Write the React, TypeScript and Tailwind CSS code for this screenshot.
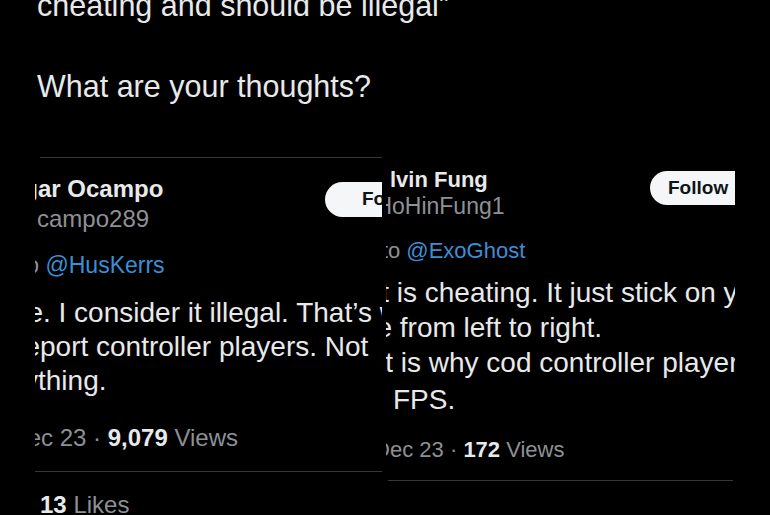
type FragProps = { w: string; shift: string; ch: string };

// right-hand slice of a glyph that was cut off by the screenshot crop
function Frag({ w, shift, ch }: FragProps) {
  return (
    <span className={`inline-block overflow-hidden align-top ${w}`}>
      <span className={`inline-block ${shift}`}>{ch}</span>
    </span>
  );
}

function LeftTweet() {
  return (
    <section className="ml-[35px] mt-[50.5px] w-[390px]">
      <div className="ml-[5px] h-px bg-[#35383b]" />
      <div className="flex items-start justify-between">
        <div className="pt-[16px]">
          <div className="whitespace-nowrap text-[24px] font-bold leading-[30px]">
            <Frag w="w-[3px]" shift="-ml-[11.7px]" ch="g" />
            ar Ocampo
          </div>
          <div className="whitespace-nowrap pl-[2px] text-[24px] leading-[30px] text-[#8d9196]">campo289</div>
        </div>
        <button
          type="button"
          className="mt-[24px] h-[35px] w-[100px] rounded-full bg-[#f4f6f7] pl-[37px] text-left text-[19px] font-bold text-[#0f1419]"
        >
          Follow
        </button>
      </div>
      <div className="mt-[16px] whitespace-nowrap text-[23px] leading-[30px] text-[#8d9196]">
        <Frag w="w-[4px]" shift="-ml-[8.8px]" ch="o" />{" "}
        <span className="text-[#3b8fd6]">@HusKerrs</span>
      </div>
      <div className="mt-[16px] text-[28px] leading-[34px]">
        <div className="whitespace-nowrap">
          <Frag w="w-[8px]" shift="-ml-[7.6px]" ch="e" />. I consider it illegal. That’s why
        </div>
        <div className="whitespace-nowrap">
          <Frag w="w-[5px]" shift="-ml-[10.6px]" ch="e" />port controller players. Not
        </div>
        <div className="whitespace-nowrap">
          <Frag w="w-[3px]" shift="-ml-[11px]" ch="y" />thing.
        </div>
      </div>
      <div className="mt-[25px] whitespace-nowrap text-[24px] leading-[30px] text-[#8d9196]">
        <Frag w="w-[6px]" shift="-ml-[7.3px]" ch="e" />c 23 · <span className="font-bold text-[#e7e9ea]">9,079</span> Views
      </div>
      <div className="mt-[18px] h-px bg-[#35383b]" />
      <div className="mt-[18px] pl-[5px] text-[24px] leading-[30px]">
        <span className="font-bold">13</span> <span className="text-[#8d9196]">Likes</span>
      </div>
    </section>
  );
}

function RightTweet() {
  return (
    <section className="absolute bottom-0 left-[382px] top-[150px] w-[353px] overflow-hidden bg-black pl-[4px]">
      <div className="flex w-[364px] items-start justify-between pt-[18px]">
        <div>
          <div className="whitespace-nowrap pl-[4px] text-[22px] font-bold leading-[24px]">lvin Fung</div>
          <div className="whitespace-nowrap text-[23px] leading-[28px] text-[#8d9196]">
            <Frag w="w-[6px]" shift="-ml-[10.6px]" ch="H" />
            oHinFung1
          </div>
        </div>
        <button
          type="button"
          className="mt-[3px] h-[34px] w-[100px] rounded-full bg-[#f4f6f7] pl-[18px] text-left text-[19px] font-bold text-[#0f1419]"
        >
          Follow
        </button>
      </div>
      <div className="mt-[17px] whitespace-nowrap text-[22px] leading-[28px] text-[#8d9196]">
        <Frag w="w-[2px]" shift="-ml-[4.1px]" ch="t" />o <span className="text-[#3b8fd6]">@ExoGhost</span>
      </div>
      <div className="mt-[10px] text-[28px] leading-[35px]">
        <div className="whitespace-nowrap">
          <Frag w="w-[3px]" shift="-ml-[4.8px]" ch="t" /> is cheating. It just stick on your
        </div>
        <div className="whitespace-nowrap">
          <Frag w="w-[6px]" shift="-ml-[9.6px]" ch="e" /> from left to right.
        </div>
        <div className="whitespace-nowrap">
          <Frag w="w-[7px]" shift="-ml-[0.8px]" ch="t" /> is why cod controller players
        </div>
        <div className="mt-[2px] whitespace-nowrap pl-[7px]">FPS.</div>
      </div>
      <div className="mt-[19px] whitespace-nowrap text-[22px] leading-[28px] text-[#8d9196]">
        <Frag w="w-[4px]" shift="-ml-[11.9px]" ch="D" />ec 23 · <span className="font-bold text-[#e7e9ea]">172</span> Views
      </div>
      <div className="ml-[2px] mt-[16px] h-px w-[345px] bg-[#35383b]" />
    </section>
  );
}

export default function App() {
  return (
    <div className="relative h-[515px] w-[770px] overflow-hidden bg-black font-['Liberation_Sans',Arial,sans-serif] text-[#e7e9ea]">
      <p className="-mt-[15px] pl-[37px] text-[30.5px] leading-[40.5px]">
        cheating and should be illegal”
        <br />
        <br />
        What are your thoughts?
      </p>
      <LeftTweet />
      <RightTweet />
    </div>
  );
}
